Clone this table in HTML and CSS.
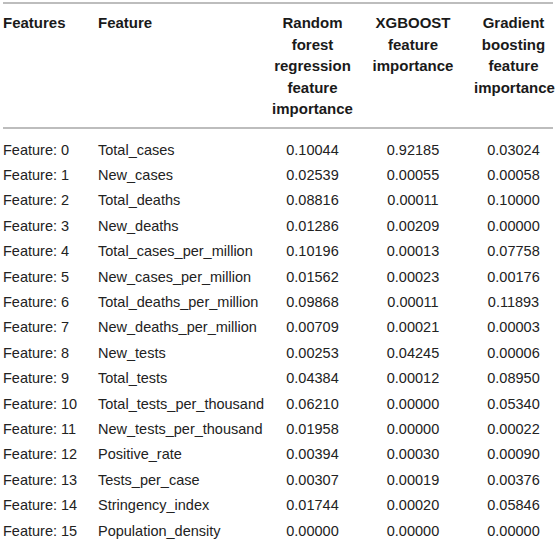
FILE: index.html
```html
<!DOCTYPE html>
<html>
<head>
<meta charset="utf-8">
<link rel="stylesheet" href="styles.css">
</head>
<body>
<table class="tbl">
  <colgroup>
    <col class="c1"><col class="c2"><col class="c3"><col class="c4"><col class="c5">
  </colgroup>
  <thead>
    <tr>
      <th class="left">Features</th>
      <th class="left">Feature</th>
      <th>Random<br>forest<br>regression<br>feature<br>importance</th>
      <th>XGBOOST<br>feature<br>importance</th>
      <th class="last">Gradient<br>boosting<br>feature<br>importance</th>
    </tr>
  </thead>
  <tbody>
    <tr class="first"><td class="left">Feature: 0</td><td class="left">Total_cases</td><td>0.10044</td><td>0.92185</td><td class="last">0.03024</td></tr>
    <tr><td class="left">Feature: 1</td><td class="left">New_cases</td><td>0.02539</td><td>0.00055</td><td class="last">0.00058</td></tr>
    <tr><td class="left">Feature: 2</td><td class="left">Total_deaths</td><td>0.08816</td><td>0.00011</td><td class="last">0.10000</td></tr>
    <tr><td class="left">Feature: 3</td><td class="left">New_deaths</td><td>0.01286</td><td>0.00209</td><td class="last">0.00000</td></tr>
    <tr><td class="left">Feature: 4</td><td class="left">Total_cases_per_million</td><td>0.10196</td><td>0.00013</td><td class="last">0.07758</td></tr>
    <tr><td class="left">Feature: 5</td><td class="left">New_cases_per_million</td><td>0.01562</td><td>0.00023</td><td class="last">0.00176</td></tr>
    <tr><td class="left">Feature: 6</td><td class="left">Total_deaths_per_million</td><td>0.09868</td><td>0.00011</td><td class="last">0.11893</td></tr>
    <tr><td class="left">Feature: 7</td><td class="left">New_deaths_per_million</td><td>0.00709</td><td>0.00021</td><td class="last">0.00003</td></tr>
    <tr><td class="left">Feature: 8</td><td class="left">New_tests</td><td>0.00253</td><td>0.04245</td><td class="last">0.00006</td></tr>
    <tr><td class="left">Feature: 9</td><td class="left">Total_tests</td><td>0.04384</td><td>0.00012</td><td class="last">0.08950</td></tr>
    <tr><td class="left">Feature: 10</td><td class="left">Total_tests_per_thousand</td><td>0.06210</td><td>0.00000</td><td class="last">0.05340</td></tr>
    <tr><td class="left">Feature: 11</td><td class="left">New_tests_per_thousand</td><td>0.01958</td><td>0.00000</td><td class="last">0.00022</td></tr>
    <tr><td class="left">Feature: 12</td><td class="left">Positive_rate</td><td>0.00394</td><td>0.00030</td><td class="last">0.00090</td></tr>
    <tr><td class="left">Feature: 13</td><td class="left">Tests_per_case</td><td>0.00307</td><td>0.00019</td><td class="last">0.00376</td></tr>
    <tr><td class="left">Feature: 14</td><td class="left">Stringency_index</td><td>0.01744</td><td>0.00020</td><td class="last">0.05846</td></tr>
    <tr><td class="left">Feature: 15</td><td class="left">Population_density</td><td>0.00000</td><td>0.00000</td><td class="last">0.00000</td></tr>
  </tbody>
</table>
</body>
</html>
```

FILE: styles.css
```css
html, body {
  margin: 0;
  padding: 0;
  background: #ffffff;
}
body {
  padding: 2px 4px 0 3px;
  font-family: "Liberation Sans", Arial, sans-serif;
  color: #222222;
  overflow: hidden;
}
.tbl {
  width: 550px;
  border-collapse: collapse;
  table-layout: fixed;
  border-top: 2px solid #bdbdbd;
}
.c1 { width: 95px; }
.c2 { width: 167px; }
.c3 { width: 95px; }
.c4 { width: 106px; }
.c5 { width: 87px; }
.tbl th {
  font-size: 15px;
  font-weight: bold;
  color: #1a1a1a;
  line-height: 21.5px;
  text-align: center;
  vertical-align: top;
  padding: 8px 0 7px 0;
  border-bottom: 2px solid #bdbdbd;
}
.tbl td {
  font-size: 14.5px;
  line-height: 25.4px;
  padding: 0;
  text-align: center;
  white-space: nowrap;
}
.tbl tr.first td {
  padding-top: 9px;
}
.tbl .left {
  text-align: left;
}
.tbl .last {
  padding-left: 8px;
}
```
